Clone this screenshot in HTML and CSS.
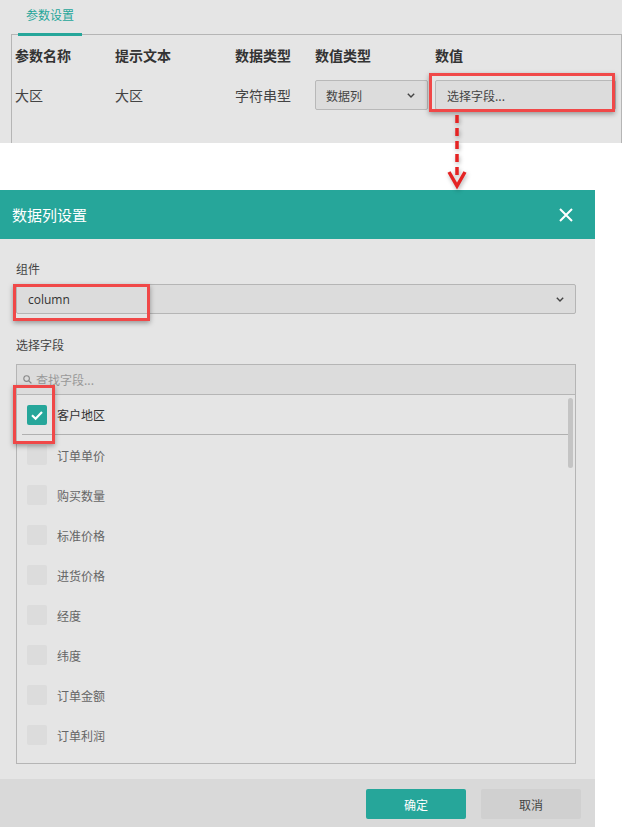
FILE: index.html
```html
<!DOCTYPE html>
<html lang="zh-CN">
<head>
<meta charset="utf-8">
<title>数据列设置</title>
<link rel="stylesheet" href="styles.css">
</head>
<body>
<div class="page">
  <section class="param-panel">
    <div class="tabs"><div class="tab">参数设置</div></div>
    <div class="panel-body">
      <div class="param-grid">
        <div class="th">参数名称</div>
        <div class="th">提示文本</div>
        <div class="th">数据类型</div>
        <div class="th">数值类型</div>
        <div class="th">数值</div>
        <div class="td">大区</div>
        <div class="td">大区</div>
        <div class="td">字符串型</div>
        <div class="td"><div class="mini-select"><span>数据列</span><svg class="chev" width="8" height="5" viewBox="0 0 8 5"><polyline points="0.8,0.8 4,4 7.2,0.8" fill="none" stroke="#444" stroke-width="1.4"/></svg></div></div>
        <div class="td"><div class="field">选择字段...</div></div>
      </div>
    </div>
  </section>

  <section class="dialog">
    <header class="dlg-header">
      <span class="dlg-title">数据列设置</span>
      <svg class="close" width="14" height="14" viewBox="0 0 14 14"><path d="M1 1L13 13M13 1L1 13" stroke="#fff" stroke-width="2" fill="none"/></svg>
    </header>
    <div class="dlg-body">
      <div class="label">组件</div>
      <div class="select"><span>column</span><svg width="8" height="5" viewBox="0 0 8 5"><polyline points="0.8,0.8 4,4 7.2,0.8" fill="none" stroke="#444" stroke-width="1.4"/></svg></div>
      <div class="label label-gap">选择字段</div>
      <div class="list">
        <div class="search"><svg width="9" height="9" viewBox="0 0 9 9"><circle cx="3.6" cy="3.6" r="2.8" fill="none" stroke="#888" stroke-width="1.1"/><path d="M5.7 5.7L8.4 8.4" stroke="#888" stroke-width="1.3"/></svg><span>查找字段...</span></div>
        <div class="items">
          <div class="item item-active"><span class="cb cb-on"><svg width="20" height="20" viewBox="0 0 20 20"><polyline points="5,10.3 8.6,13.8 15,7" fill="none" stroke="#fff" stroke-width="2.2"/></svg></span><span class="item-text">客户地区</span></div>
          <div class="item"><span class="cb"></span><span class="item-text">订单单价</span></div>
          <div class="item"><span class="cb"></span><span class="item-text">购买数量</span></div>
          <div class="item"><span class="cb"></span><span class="item-text">标准价格</span></div>
          <div class="item"><span class="cb"></span><span class="item-text">进货价格</span></div>
          <div class="item"><span class="cb"></span><span class="item-text">经度</span></div>
          <div class="item"><span class="cb"></span><span class="item-text">纬度</span></div>
          <div class="item"><span class="cb"></span><span class="item-text">订单金额</span></div>
          <div class="item"><span class="cb"></span><span class="item-text">订单利润</span></div>
        </div>
        <div class="thumb"></div>
      </div>
    </div>
    <footer class="dlg-footer">
      <button class="btn btn-primary">确定</button>
      <button class="btn">取消</button>
    </footer>
  </section>

  <div class="mark mark-field"></div>
  <div class="mark mark-select"></div>
  <div class="mark mark-check"></div>
  <svg class="arrow" width="26" height="80" viewBox="0 0 26 80"><line x1="12" y1="3" x2="12" y2="68" stroke="#e52323" stroke-width="3.5" stroke-dasharray="8 5"/><polyline points="4,60 12,74 20,60" fill="none" stroke="#e52323" stroke-width="3.5"/></svg>
</div>
</body>
</html>
```
FILE: styles.css
```css
* { box-sizing: border-box; }
html, body { margin: 0; padding: 0; background: #fff; }
body { font-family: "Noto Sans CJK SC", "Open Sans", sans-serif; color: #333; }
.page { position: relative; width: 622px; height: 827px; overflow: hidden; }

.param-panel { background: #e5e5e5; height: 143px; }
.tabs { height: 34px; padding-left: 18px; display: flex; align-items: flex-start; }
.tab { position: relative; height: 36px; padding: 0 8px; line-height: 30px; font-size: 12px; color: #26a69a; border-bottom: 3px solid #26a69a; }
.panel-body { margin-left: 11px; height: 109px; border: 1px solid #b5b5b5; border-bottom: none; padding: 10px 0 0 3px; }
.param-grid { display: grid; grid-template-columns: 100px 120px 80px 120px 181px; row-gap: 15px; }
.th { font-size: 14px; font-weight: bold; line-height: 20px; color: #333; }
.td { font-size: 14px; height: 30px; display: flex; align-items: center; color: #444; }
.mini-select { width: 113px; height: 30px; border: 1px solid #b8b8b8; border-radius: 2px; background: #dcdcdc; display: flex; align-items: center; justify-content: space-between; padding: 0 12px 0 10px; font-size: 12px; color: #444; }
.field { width: 181px; height: 30px; border: 1px solid #b8b8b8; border-radius: 2px; background: #dcdcdc; display: flex; align-items: center; padding-left: 11px; font-size: 12px; color: #444; }

.dialog { width: 595px; margin-top: 47px; background: #e5e5e5; }
.dlg-header { height: 49px; background: #26a69a; display: flex; align-items: center; justify-content: space-between; padding: 0 22px 0 12px; }
.dlg-title { color: #fff; font-size: 15px; }
.dlg-body { height: 540px; padding: 21px 19px 0 16px; }
.label { font-size: 12px; line-height: 18px; color: #444; }
.label-gap { margin-top: 22px; }
.select { margin-top: 6px; height: 30px; border: 1px solid #b5b5b5; border-radius: 2px; background: #dcdcdc; display: flex; align-items: center; justify-content: space-between; padding: 0 11px 0 11px; font-family: "Open Sans", "Noto Sans CJK SC", sans-serif; font-size: 12px; color: #333; }
.list { position: relative; margin-top: 10px; border: 1px solid #b5b5b5; }
.search { height: 30px; background: #dcdcdc; border-bottom: 1px solid #b5b5b5; display: flex; align-items: center; padding-left: 6px; gap: 4px; font-size: 12px; color: #999; }
.items { height: 368px; overflow: hidden; }
.item { height: 40px; margin: 0 5px; padding-left: 5px; display: flex; align-items: center; gap: 10px; }
.item-active { border-bottom: 1px solid #b0b0b0; }
.cb { width: 20px; height: 20px; border-radius: 2px; background: #dcdcdc; display: block; flex: none; }
.cb svg { display: block; }
.cb-on { background: #26a69a; }
.item-text { font-size: 12px; color: #666; }
.item-active .item-text { color: #333; }
.thumb { position: absolute; right: 2px; top: 33px; width: 5px; height: 70px; border-radius: 3px; background: #c4c4c4; }

.dlg-footer { height: 48px; background: #d9d9d9; display: flex; justify-content: flex-end; gap: 15px; padding: 10px 14px 0 0; }
.btn { width: 100px; height: 30px; border: none; border-radius: 2px; background: #d0d0d0; color: #444; font-family: "Noto Sans CJK SC", sans-serif; font-size: 12px; padding: 0; }
.btn-primary { background: #26a69a; color: #fff; }

.mark { position: absolute; border: 3px solid #f04848; box-shadow: 0 2px 5px rgba(0,0,0,0.35); }
.mark-field { left: 429px; top: 73px; width: 186px; height: 39px; }
.mark-select { left: 13px; top: 284px; width: 137px; height: 37px; }
.mark-check { left: 13px; top: 385px; width: 42px; height: 59px; }
.arrow { position: absolute; left: 445px; top: 112px; filter: drop-shadow(1px 2px 2px rgba(0,0,0,0.3)); }
```
